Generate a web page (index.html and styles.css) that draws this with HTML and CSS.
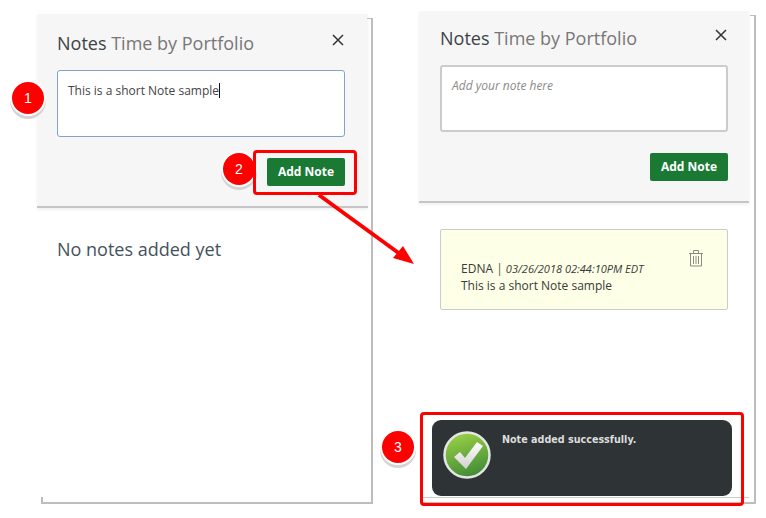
FILE: index.html
```html
<!DOCTYPE html>
<html lang="en">
<head>
  <meta charset="UTF-8" />
  <title>Notes - Add Note</title>
  <link rel="stylesheet" href="styles.css">
</head>
<body>

  <div class="board">

    <!-- before -->
    <section class="panel panel-before">
      <div class="notes-head">
        <div class="head-row">
          <h2 class="title">Notes <span class="title-sub">Time by Portfolio</span></h2>
          <svg class="close" width="12" height="12" viewBox="0 0 12 12"><path d="M1 1l10 10M11 1L1 11" stroke="#333" stroke-width="1.5" fill="none"/></svg>
        </div>
        <div class="note-input active">This is a short Note sample<span class="caret"></span></div>
        <div class="head-actions"><button class="add-btn">Add Note</button></div>
      </div>
      <p class="empty">No notes added yet</p>
    </section>

    <!-- after -->
    <section class="panel panel-after">
      <div class="notes-head">
        <div class="head-row">
          <h2 class="title">Notes <span class="title-sub">Time by Portfolio</span></h2>
          <svg class="close" width="12" height="12" viewBox="0 0 12 12"><path d="M1 1l10 10M11 1L1 11" stroke="#333" stroke-width="1.5" fill="none"/></svg>
        </div>
        <div class="note-input placeholder">Add your note here</div>
        <div class="head-actions"><button class="add-btn">Add Note</button></div>
      </div>
      <div class="note-card">
        <div class="note-text">
          <div><span class="note-author">EDNA</span> <span class="note-sep">|</span> <em class="note-date">03/26/2018 02:44:10PM EDT</em></div>
          <div>This is a short Note sample</div>
        </div>
        <svg class="trash" width="16" height="18" viewBox="0 0 16 18"><path d="M1 4.5h14M2.5 4.5v12.5h11V4.5M5.5 4.5V1.500h5v3M5.500 7v8M8 7v8M10.500 7v8" stroke="#8a8a84" stroke-width="1" fill="none"/></svg>
      </div>
    </section>

    <!-- callouts drawn over the screenshots -->
    <div class="badge badge-1">1</div>
    <div class="badge badge-2">2</div>
    <div class="badge badge-3">3</div>
    <div class="callout callout-btn"></div>

    <svg class="arrow" width="104" height="76" viewBox="0 0 104 76">
      <path d="M3 2L84 61" stroke="#f00" stroke-width="4" fill="none"/>
      <path d="M98 71L77 65L87 53Z" fill="#f00"/>
    </svg>

    <div class="toast-line"></div>
    <div class="toast">
      <svg class="toast-icon" width="48" height="48" viewBox="0 0 48 48">
        <defs>
          <linearGradient id="okFill" x1="0.3" y1="0" x2="0.6" y2="1">
            <stop offset="0" stop-color="#9bd146"/>
            <stop offset="1" stop-color="#3f8a36"/>
          </linearGradient>
          <linearGradient id="okMark" x1="0" y1="0" x2="0" y2="1">
            <stop offset="0" stop-color="#fff"/>
            <stop offset="1" stop-color="#d0d0d0"/>
          </linearGradient>
        </defs>
        <circle cx="24" cy="24" r="22.500" fill="url(#okFill)" stroke="#e4e6e4" stroke-width="2.500"/>
        <path d="M11 26l6-5 5 6L34 11l6 4-17 23z" fill="url(#okMark)"/>
      </svg>
      <div class="toast-msg">Note added successfully.</div>
    </div>
    <div class="callout callout-toast"></div>

  </div>

</body>
</html>
```

FILE: styles.css
```css
body {
  margin: 0;
  background: #fff;
  font-family: "Open Sans", Arial, sans-serif;
  color: #333;
}

.board {
  position: relative;
  display: flex;
  width: 766px;
  height: 518px;
  padding: 15px 0 0 41px;
  gap: 50px;
  box-sizing: border-box;
  overflow: hidden;
}

.panel {
  position: relative;
  box-sizing: border-box;
  border-right: 2px solid #bdbdbd;
  border-bottom: 2px solid #bdbdbd;
}

/* top corner of the frame, next to the grey header */
.panel::after {
  content: "";
  position: absolute;
  top: 0;
  right: 0;
  width: 4px;
  height: 1px;
  background: #bdbdbd;
}

.panel-before {
  width: 332px;
  height: 486px;
  margin-top: 3px;
}

/* small tick where the crop of the left shot ends */
.panel-before::before {
  content: "";
  position: absolute;
  left: 0;
  bottom: 0;
  width: 2px;
  height: 5px;
  background: #bdbdbd;
}

.panel-after {
  width: 333px;
  height: 489px;
}

.notes-head {
  position: relative;
  margin: -4px 3px 0 -4px;
  height: 194px;
  box-sizing: border-box;
  padding: 17px 23px 0 20px;
  background: #f6f6f6;
  border-bottom: 2px solid #c6c6c6;
  box-shadow: 0 2px 3px rgba(0, 0, 0, 0.06);
}

.panel-after .notes-head {
  height: 192px;
  margin-right: 5px;
  padding: 15px 21px 0 21px;
}

.head-row {
  display: flex;
  justify-content: space-between;
  height: 39px;
}

.title {
  margin: 0;
  font-size: 18px;
  font-weight: 400;
  line-height: 25px;
  color: #3d4345;
}

.title-sub {
  color: #777;
}

.close {
  margin: 3px 1px 0 0;
}

.note-input {
  height: 67px;
  box-sizing: border-box;
  padding: 10px;
  background: #fff;
  border: 2px solid #ccc;
  border-radius: 3px;
  font-size: 12px;
  line-height: 17px;
}

.note-input.active {
  border: 1px solid #82a3c4;
  padding: 11px 10px;
  color: #444;
}

.note-input.placeholder {
  font-style: italic;
  color: #8a8a8a;
}

.caret {
  display: inline-block;
  width: 1px;
  height: 15px;
  background: #111;
  vertical-align: -3px;
}

.head-actions {
  display: flex;
  justify-content: flex-end;
  margin-top: 21px;
}

.add-btn {
  width: 78px;
  height: 28px;
  padding: 0 0 2px;
  border: none;
  border-radius: 2px;
  background: #1a7a34;
  color: #fff;
  font-family: inherit;
  font-size: 12px;
  font-weight: 700;
}

.empty {
  margin: 29px 0 0 16px;
  font-size: 18px;
  line-height: 25px;
  color: #44525c;
}

.note-card {
  display: flex;
  justify-content: space-between;
  height: 81px;
  box-sizing: border-box;
  margin: 26px 26px 0 17px;
  padding: 30px 23px 0 20px;
  background: #fdffe6;
  border: 1px solid #ccc;
  border-radius: 2px;
  font-size: 12px;
  line-height: 17px;
  color: #3a3a3a;
}

.note-sep {
  color: #555;
}

.note-date {
  font-size: 11px;
}

.trash {
  margin: -11px 0 0 0;
}

.badge {
  position: absolute;
  width: 32px;
  height: 32px;
  border-radius: 50%;
  background: #f00;
  color: #fff;
  font-family: "Liberation Sans", Arial, sans-serif;
  font-size: 14px;
  line-height: 32px;
  text-align: center;
  box-shadow: 0 0 0 2px #fff, 0 3px 0 2px #d4d4d4;
}

.badge-1 { left: 12px; top: 82px; }
.badge-2 { left: 223px; top: 153px; }
.badge-3 { left: 382px; top: 431px; }

.callout {
  position: absolute;
  box-sizing: border-box;
  border: 3.500px solid #f00;
  border-radius: 4px;
}

.callout-btn {
  left: 253px;
  top: 150px;
  width: 104px;
  height: 45px;
}

.callout-toast {
  left: 420px;
  top: 412px;
  width: 324px;
  height: 94px;
}

.arrow {
  position: absolute;
  left: 316px;
  top: 193px;
}

.toast {
  position: absolute;
  left: 432px;
  top: 420px;
  display: flex;
  width: 300px;
  height: 76px;
  box-sizing: border-box;
  padding: 11px 0 0 11px;
  gap: 11px;
  background: #2e3336;
  border-radius: 9px;
}

.toast-msg {
  padding-top: 2px;
  font-family: "DejaVu Sans", Verdana, sans-serif;
  font-size: 9.600px;
  font-weight: 700;
  line-height: 14px;
  color: #ddd;
}

.toast-line {
  position: absolute;
  left: 420px;
  top: 497px;
  width: 329px;
  height: 1px;
  background: #ccc;
}
```
